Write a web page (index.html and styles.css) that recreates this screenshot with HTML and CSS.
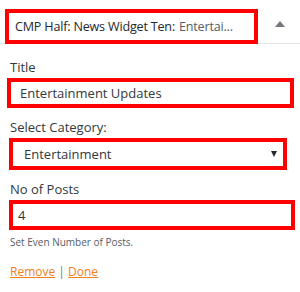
FILE: index.html
```html
<!DOCTYPE html>
<html>
<head>
<meta charset="utf-8">
<link rel="stylesheet" href="styles.css">
</head>
<body>
<div class="widget">
  <div class="widget-top">
    <div class="widget-title mark">
      <span class="name">CMP Half: News Widget Ten:</span>
      <span class="in-title">Entertai...</span>
    </div>
    <span class="toggle"></span>
  </div>
  <div class="widget-inside">
    <div class="field">
      <label class="label">Title</label>
      <div class="input mark title-input">Entertainment Updates</div>
    </div>
    <div class="field">
      <label class="label">Select Category:</label>
      <div class="input mark select-input"><span>Entertainment</span><span class="caret"></span></div>
    </div>
    <div class="field">
      <label class="label">No of Posts</label>
      <div class="input mark posts-input">4</div>
      <p class="hint">Set Even Number of Posts.</p>
    </div>
    <div class="actions"><a class="link">Remove</a> <span class="sep">|</span> <a class="link">Done</a></div>
  </div>
</div>
</body>
</html>
```
FILE: styles.css
```css
html, body {
  margin: 0;
  padding: 0;
  background: #fff;
}
body {
  font-family: "Open Sans", "Noto Sans", sans-serif;
  font-size: 13px;
  color: #32373c;
  width: 300px;
  height: 292px;
  overflow: hidden;
}
.mark {
  border: 4px solid #ff0000;
  box-sizing: border-box;
}
.widget-top {
  display: flex;
  align-items: flex-start;
  height: 44px;
  box-sizing: border-box;
  border-bottom: 1px solid #e5e5e5;
  padding: 9px 0 0 5px;
}
.widget-title {
  width: 253px;
  height: 35px;
  display: flex;
  align-items: center;
  padding-left: 6px;
  white-space: nowrap;
  overflow: hidden;
  font-size: 12.6px;
  letter-spacing: -0.2px;
  color: #23282d;
}
.name {
  margin-right: 4px;
}
.in-title {
  color: #555d66;
}
.toggle {
  margin: 12px 0 0 17px;
  width: 0;
  height: 0;
  border-left: 5px solid transparent;
  border-right: 5px solid transparent;
  border-bottom: 6px solid #72777c;
}
.widget-inside {
  padding: 14px 0 0 7px;
}
.field {
  display: flex;
  flex-direction: column;
}
.label {
  line-height: 18px;
  color: #32373c;
  margin: 0 0 2px 3px;
}
.input {
  height: 30px;
  display: flex;
  align-items: center;
  color: #32373c;
  font-size: 13px;
}
.title-input {
  width: 287px;
  padding-left: 9px;
  margin-bottom: 10px;
}
.select-input {
  width: 278px;
  margin-left: 2px;
  height: 32px;
  padding: 0 6px 0 11px;
  justify-content: space-between;
  margin-bottom: 10px;
}
.caret {
  width: 0;
  height: 0;
  border-left: 3.5px solid transparent;
  border-right: 3.5px solid transparent;
  border-top: 6px solid #23282d;
}
.posts-input {
  width: 286px;
  margin-left: 2px;
  height: 30px;
  padding-left: 5px;
}
.hint {
  margin: 4px 0 0 3px;
  font-size: 10px;
  color: #555d66;
  line-height: 16px;
}
.actions {
  margin: 13px 0 0 3px;
  line-height: 18px;
  font-size: 12px;
}
.link {
  color: #f57e20;
  text-decoration: underline;
}
.sep {
  color: #72777c;
}
```
